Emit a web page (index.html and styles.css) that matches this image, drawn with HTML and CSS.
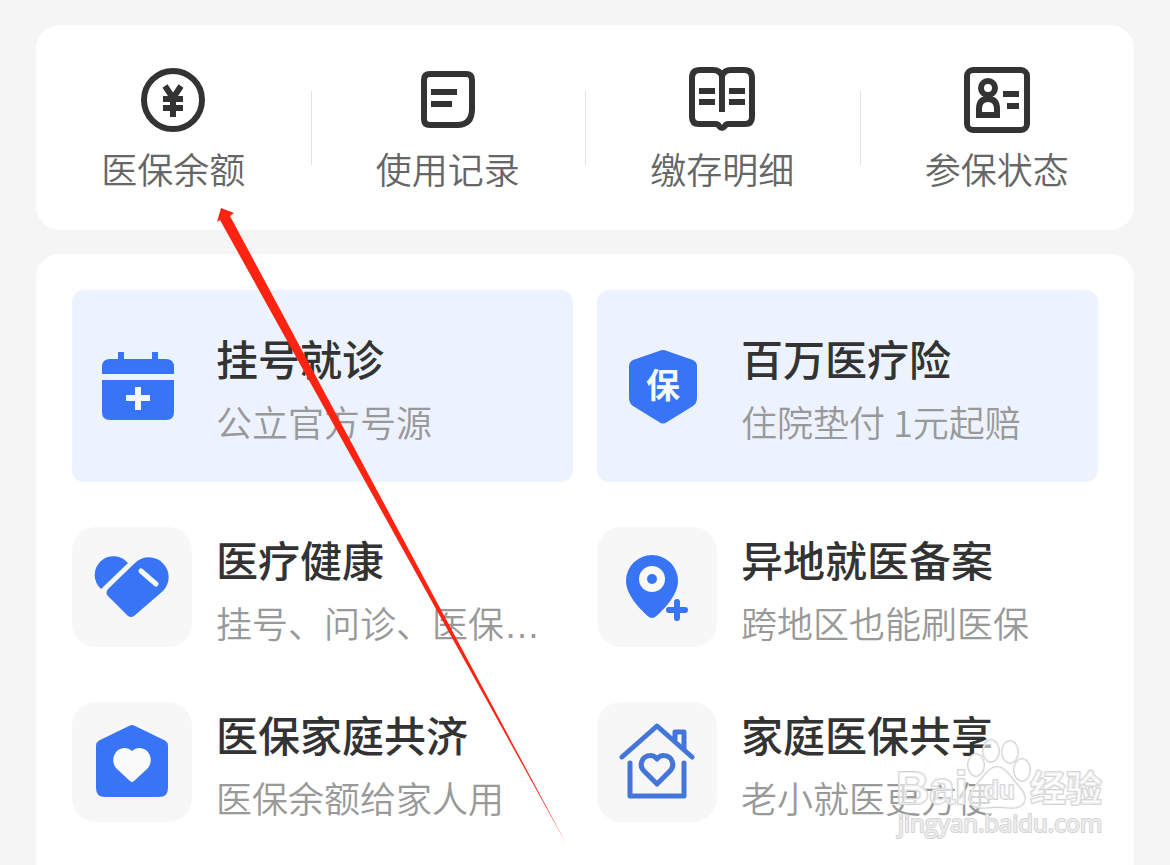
FILE: index.html
```html
<!DOCTYPE html>
<html lang="zh-CN">

<head>
  <meta charset="UTF-8">
  <meta name="viewport" content="width=device-width, initial-scale=1.0">
  <title>医保服务</title>
  <link rel="stylesheet" href="styles.css">
</head>

<body>
  <nav class="card quick">
    <a class="quick__item" href="#balance">
      <svg class="quick__icon" viewBox="0 0 66 66" aria-hidden="true">
        <circle cx="33" cy="33" r="29" />
        <path d="M25 19l8 12 8-12M33 30v20M23 32h20M23 41h20" />
      </svg>
      <span class="quick__label">医保余额</span>
    </a>
    <a class="quick__item" href="#records">
      <svg class="quick__icon" viewBox="0 0 66 66" aria-hidden="true">
        <path d="M15 7h36q6 0 6 6v29q0 16-15 16H15q-6 0-6-6V13q0-6 6-6zM16 25h26M16 37h21" />
      </svg>
      <span class="quick__label">使用记录</span>
    </a>
    <a class="quick__item" href="#payments">
      <svg class="quick__icon" viewBox="0 0 66 66" aria-hidden="true">
        <path d="M33 9q-2-6-9-6H11q-8 0-8 8v39q0 7 7 7h17q2 0 3 2 3 4 6 0 1-2 3-2h17q7 0 7-7V11q0-8-8-8H42q-7 0-9 6v36M10 24h16M10 35h16M40 24h16M40 35h16" />
      </svg>
      <span class="quick__label">缴存明细</span>
    </a>
    <a class="quick__item" href="#status">
      <svg class="quick__icon" viewBox="0 0 66 66" aria-hidden="true">
        <rect x="3" y="3" width="60" height="60" rx="6" />
        <circle cx="24" cy="21" r="7" />
        <path d="M15 48v-6q0-10 9-10t9 10v6zM39 27h16M43 39h12" />
      </svg>
      <span class="quick__label">参保状态</span>
    </a>
  </nav>

  <main class="card services">
    <div class="services__grid">
      <a class="service service--featured" href="#register">
        <svg class="service__icon" viewBox="0 0 72 72" aria-hidden="true">
          <path d="M16 2h6v7h28V2h6v7h8q8 0 8 8v7H0v-7q0-8 8-8h8z" />
          <path d="M0 30h72v32q0 8-8 8H8q-8 0-8-8z" />
          <path class="cut" d="M36 37v23M24 48h24" stroke-width="6" />
        </svg>
        <span class="service__text">
          <span class="service__title">挂号就诊</span>
          <span class="service__note">公立官方号源</span>
        </span>
      </a>
      <a class="service service--featured" href="#insurance">
        <svg class="service__icon" viewBox="0 0 72 72" aria-hidden="true">
          <path d="M32 1q4-2 8 0l26 9q4 2 4 6v32q0 5-4 8L40 72q-4 3-8 0L6 56q-4-3-4-8V16q0-4 4-6z" />
          <text class="service__mark" x="36" y="48" text-anchor="middle">保</text>
        </svg>
        <span class="service__text">
          <span class="service__title">百万医疗险</span>
          <span class="service__note">住院垫付 1元起赔</span>
        </span>
      </a>
    </div>

    <div class="services__grid services__grid--list">
      <a class="service" href="#health">
        <svg class="service__icon service__icon--tile" viewBox="0 0 120 120" aria-hidden="true">
          <path d="M29 62A18.800 18.800 0 1 1 56 36z" />
          <path d="M36 62l27-26a19.800 19.800 0 0 1 28 28L62 89q-3 2-6 0L36 69q-3-3 0-7z" />
          <path class="cut" d="M69 44l15 13" stroke-width="5" stroke-linecap="round" />
        </svg>
        <span class="service__text">
          <span class="service__title">医疗健康</span>
          <span class="service__note">挂号、问诊、医保<span class="service__more">…</span></span>
        </span>
      </a>
      <a class="service" href="#remote">
        <svg class="service__icon service__icon--tile" viewBox="0 0 120 120" aria-hidden="true">
          <path d="M55 28a26 26 0 0 1 26 26c0 13-13 28-23 36q-3 2-6 0C42 82 29 67 29 54a26 26 0 0 1 26-26z" />
          <circle class="hole" cx="55" cy="52" r="13" />
          <circle cx="55" cy="52" r="5" />
          <path class="line" d="M80 75v16M72 83h16" stroke-width="6" />
        </svg>
        <span class="service__text">
          <span class="service__title">异地就医备案</span>
          <span class="service__note">跨地区也能刷医保</span>
        </span>
      </a>
      <a class="service" href="#family">
        <svg class="service__icon service__icon--tile" viewBox="0 0 120 120" aria-hidden="true">
          <path d="M58 23.500q2-1 4 0l31 15q3 2 3 5V86q0 9-9 9H33q-9 0-9-9V43.500q0-3 3-5z" />
          <path class="hole" d="M60 49c5-5 12-3 15 0 5 5 5 13 0 18L62 79q-2 2-4 0L45 67c-5-5-5-13 0-18 3-3 10-5 15 0z" />
        </svg>
        <span class="service__text">
          <span class="service__title">医保家庭共济</span>
          <span class="service__note">医保余额给家人用</span>
        </span>
      </a>
      <a class="service" href="#share">
        <svg class="service__icon service__icon--tile service__icon--home" viewBox="0 0 120 120" aria-hidden="true">
          <path class="line" d="M25 55l35-31 35 31M33 61v33h54V61M78 38v-8h9v16" stroke-width="5" />
          <path class="line" d="M60 57c4-5 11-4 14 0 3 5 2 9-1 12L60 82 47 69c-3-3-4-7-1-12 3-4 10-5 14 0z" stroke-width="5" />
        </svg>
        <span class="service__text">
          <span class="service__title">家庭医保共享</span>
          <span class="service__note">老小就医更方便</span>
        </span>
      </a>
    </div>
  </main>

  <svg class="arrow" viewBox="0 0 360 650" aria-hidden="true">
    <path d="M11 8l13 5-4 3 337 629L10 20l-3 2z" />
  </svg>

  <svg class="watermark" viewBox="0 0 220 110" aria-hidden="true">
    <text class="watermark__name" x="4" y="69">Bai</text>
    <path d="M105 32c8 0 12 8 18 15 8 9 13 15 8 22-5 6-14 3-26 3s-21 3-26-3c-5-7 0-13 8-22 6-7 10-15 18-15z" />
    <ellipse cx="84" cy="30" rx="8" ry="11" />
    <ellipse cx="99" cy="16" rx="8" ry="11" />
    <ellipse cx="118" cy="17" rx="8" ry="11" />
    <ellipse cx="130" cy="35" rx="8" ry="11" />
    <text class="watermark__du" x="91" y="64">du</text>
    <text class="watermark__cn" x="138" y="67">经验</text>
    <text class="watermark__url" x="6" y="97">jingyan.baidu.com</text>
  </svg>
</body>

</html>
```
FILE: styles.css
```css
* {
  box-sizing: border-box;
}

body {
  position: relative;
  display: flex;
  flex-direction: column;
  gap: 24px;
  min-height: 100vh;
  margin: 0;
  padding: 25px 36px 0;
  background: #f5f5f5;
  font-family: "Noto Sans CJK SC", sans-serif;
  overflow-x: hidden;
}

a {
  color: inherit;
  text-decoration: none;
}

.card {
  background: #fff;
  border-radius: 24px;
}

.quick {
  display: grid;
  grid-template-columns: repeat(4, 1fr);
}

.quick__item {
  display: flex;
  flex-direction: column;
  align-items: center;
  gap: 9px;
  padding: 42px 0 36px;
}

.quick__item + .quick__item {
  background: linear-gradient(#e2e2e2, #e2e2e2) left center / 1px 74px no-repeat;
}

.quick__icon {
  width: 66px;
  height: 66px;
  fill: none;
  stroke: #333;
  stroke-width: 6px;
}

.quick__label {
  color: #666;
  font-size: 36px;
  font-weight: 350;
  line-height: 52px;
}

.services {
  flex: 1;
  padding: 36px 36px 39px;
  border-radius: 24px 24px 0 0;
}

.services__grid {
  display: grid;
  grid-template-columns: repeat(2, 1fr);
  gap: 24px;
}

.services__grid--list {
  margin-top: 42px;
  row-gap: 49px;
}

.service {
  display: flex;
  align-items: center;
  gap: 24px;
  min-width: 0;
}

.service--featured {
  gap: 42px;
  padding: 33px 30px;
  background: #edf3fe;
  border-radius: 12px;
}

.service__icon {
  flex: none;
  width: 72px;
  height: 72px;
  overflow: visible;
  fill: #3875f6;
}

.service__icon--tile {
  width: 120px;
  height: 120px;
  background: #f7f7f7;
  border-radius: 24px;
}

.service__icon .cut {
  stroke: #f4f8ff;
}

.service__icon .hole {
  fill: #fafafa;
}

.service__icon .line {
  fill: none;
  stroke: #3875f6;
  stroke-linecap: round;
  stroke-linejoin: round;
}

.service__icon--home .line {
  stroke: #4475d9;
}

.service__mark {
  fill: #f4f8ff;
  font-size: 34px;
  font-weight: 700;
}

.service__text {
  display: flex;
  flex-direction: column;
  gap: 2px;
  padding-bottom: 2px;
  white-space: nowrap;
}

.service__title {
  color: #333;
  font-size: 42px;
  font-weight: 500;
  line-height: 70px;
}

.service__note {
  color: #999;
  font-size: 36px;
  font-weight: 350;
  line-height: 52px;
}

.service__more {
  font-family: "Liberation Sans", sans-serif;
  line-height: 1;
}

/* annotation over the cards */
.arrow {
  position: absolute;
  top: 200px;
  left: 210px;
  width: 360px;
  height: 650px;
  fill: #ff2412;
  pointer-events: none;
}

.watermark {
  position: absolute;
  top: 735px;
  right: 58px;
  width: 220px;
  height: 110px;
  fill: rgba(255, 255, 255, 0.6);
  stroke: #d4d4d4;
  stroke-width: 2px;
  stroke-linejoin: round;
  paint-order: stroke;
  pointer-events: none;
}

.watermark__name {
  font: 700 46px "Liberation Sans", sans-serif;
}

.watermark__du {
  font: 700 26px "Liberation Sans", sans-serif;
}

.watermark__cn {
  font-size: 36px;
  font-weight: 700;
}

.watermark__url {
  font: 24px "Open Sans", sans-serif;
}
```
